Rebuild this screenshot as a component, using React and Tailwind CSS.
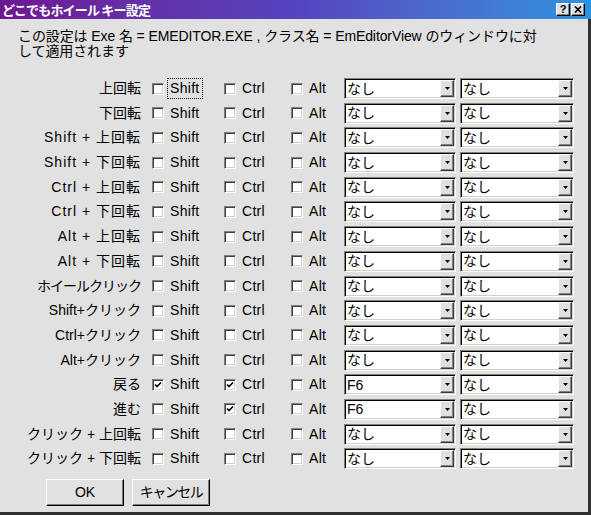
import React from "react";

const rows = [
  { label: "上回転", s: false, c: false, a: false, k1: "なし", k2: "なし", focus: true },
  { label: "下回転", s: false, c: false, a: false, k1: "なし", k2: "なし" },
  { label: "Shift + 上回転", s: false, c: false, a: false, k1: "なし", k2: "なし", wide: true },
  { label: "Shift + 下回転", s: false, c: false, a: false, k1: "なし", k2: "なし", wide: true },
  { label: "Ctrl + 上回転", s: false, c: false, a: false, k1: "なし", k2: "なし", wide: true },
  { label: "Ctrl + 下回転", s: false, c: false, a: false, k1: "なし", k2: "なし", wide: true },
  { label: "Alt + 上回転", s: false, c: false, a: false, k1: "なし", k2: "なし", wide: true },
  { label: "Alt + 下回転", s: false, c: false, a: false, k1: "なし", k2: "なし", wide: true },
  { label: "ホイールクリック", s: false, c: false, a: false, k1: "なし", k2: "なし", narrow: true },
  { label: "Shift+クリック", s: false, c: false, a: false, k1: "なし", k2: "なし" },
  { label: "Ctrl+クリック", s: false, c: false, a: false, k1: "なし", k2: "なし" },
  { label: "Alt+クリック", s: false, c: false, a: false, k1: "なし", k2: "なし" },
  { label: "戻る", s: true, c: true, a: false, k1: "F6", k2: "なし" },
  { label: "進む", s: false, c: true, a: false, k1: "F6", k2: "なし" },
  { label: "クリック + 上回転", s: false, c: false, a: false, k1: "なし", k2: "なし" },
  { label: "クリック + 下回転", s: false, c: false, a: false, k1: "なし", k2: "なし" },
];

function Box({ checked }) {
  return (
    <span className="w-[12px] h-[12px] shrink-0 bg-white border border-t-[#808080] border-l-[#808080] border-b-white border-r-white shadow-[inset_1px_1px_0_#404040,inset_-1px_-1px_0_#d4d0c8] flex items-center justify-center">
      {checked && (
        <svg width="8" height="8" viewBox="0 0 8 8">
          <polyline points="1,3.5 3,5.5 7,1.5" fill="none" stroke="#000" strokeWidth="1.6" />
        </svg>
      )}
    </span>
  );
}

function Check({ checked, text, width, focus }) {
  return (
    <div className={`flex items-center h-[21px] shrink-0 ${width}`}>
      <Box checked={checked} />
      <span
        className={`ml-[3px] h-[21px] px-[2px] flex items-center border border-dotted tracking-[0.3px] ${
          focus ? "border-black" : "border-transparent"
        }`}
      >
        {text}
      </span>
    </div>
  );
}

function Combo({ value, width }) {
  return (
    <div
      className={`${width} h-[21px] shrink-0 flex items-center bg-white border border-t-[#808080] border-l-[#808080] border-b-white border-r-white shadow-[inset_1px_1px_0_#000,inset_-1px_-1px_0_#d4d0c8] pl-[2px] pr-[1px]`}
    >
      <span className="flex-1 leading-none">{value}</span>
      <span className="w-[14px] h-[17px] bg-[#e0e0e0] border border-t-white border-l-white border-b-[#404040] border-r-[#404040] shadow-[inset_-1px_-1px_0_#808080] flex items-center justify-center">
        <svg width="7" height="5" viewBox="0 0 7 5">
          <polygon points="1,1 6,1 3.5,4" fill="#000" />
        </svg>
      </span>
    </div>
  );
}

function Button({ children, cls = "" }) {
  return (
    <div className={`w-[78px] h-[27px] flex items-center justify-center bg-[#e1e1e1] border border-t-white border-l-white border-b-black border-r-black shadow-[inset_-1px_-1px_0_#808080] ${cls}`}>
      {children}
    </div>
  );
}

export default function App() {
  return (
    <div
      className="w-[591px] h-[515px] flex flex-col text-[14px] text-black overflow-hidden"
      style={{ fontFamily: '"Liberation Sans", "Noto Sans CJK JP", sans-serif' }}
    >
      <div className="h-[19px] shrink-0 flex items-center bg-gradient-to-r from-[#6e1692] via-[#5444c0] to-[#2a93e0] pl-[2px] pr-[6px]">
        <span className="text-white font-bold text-[13px] leading-none tracking-[-0.8px]" style={{ fontFamily: '"Noto Sans CJK JP", sans-serif' }}>
          どこでもホイール キー設定
        </span>
        <div className="ml-auto flex gap-[1px]">
          <span className="w-[14px] h-[13px] bg-[#e0e0e0] border border-t-white border-l-white border-b-black border-r-black shadow-[inset_-1px_-1px_0_#808080] flex items-center justify-center text-[11px] font-bold leading-none">
            ?
          </span>
          <span className="w-[14px] h-[13px] bg-[#e0e0e0] border border-t-white border-l-white border-b-black border-r-black shadow-[inset_-1px_-1px_0_#808080] flex items-center justify-center">
            <svg width="8" height="7" viewBox="0 0 8 7">
              <path d="M1 0.5 L7 6.5 M7 0.5 L1 6.5" stroke="#000" strokeWidth="1.6" />
            </svg>
          </span>
        </div>
      </div>
      <div className="flex-1 flex flex-col bg-[#e1e1e1] border-r-[3px] border-b-[3px] border-r-[#303030] border-b-[#303030]">
        <div className="pl-[18px] pt-[10px] leading-[15px] tracking-[-0.1px]">
          <div>この設定は Exe 名 = EMEDITOR.EXE , クラス名 = EmEditorView のウィンドウに対</div>
          <div>して適用されます</div>
        </div>
        <div className="mt-[19px] flex flex-col">
          {rows.map((r, i) => (
            <div key={i} className="h-[24.7px] flex items-start">
              <div
                className={`w-[141px] h-[21px] flex items-center justify-end shrink-0 whitespace-nowrap ${
                  r.wide ? "tracking-[1px]" : r.narrow ? "tracking-[-1px]" : ""
                }`}
              >
                {r.label}
              </div>
              <div className="w-[11px] shrink-0" />
              <Check checked={r.s} text="Shift" width="w-[72px]" focus={r.focus} />
              <Check checked={r.c} text="Ctrl" width="w-[67px]" />
              <Check checked={r.a} text="Alt" width="w-[53px]" />
              <Combo value={r.k1} width="w-[112px]" />
              <div className="w-[4px] shrink-0" />
              <Combo value={r.k2} width="w-[114px]" />
            </div>
          ))}
        </div>
        <div className="mt-[6px] pl-[46px] flex gap-[8px]">
          <Button>OK</Button>
          <Button cls="tracking-[-1.5px]">キャンセル</Button>
        </div>
      </div>
    </div>
  );
}
